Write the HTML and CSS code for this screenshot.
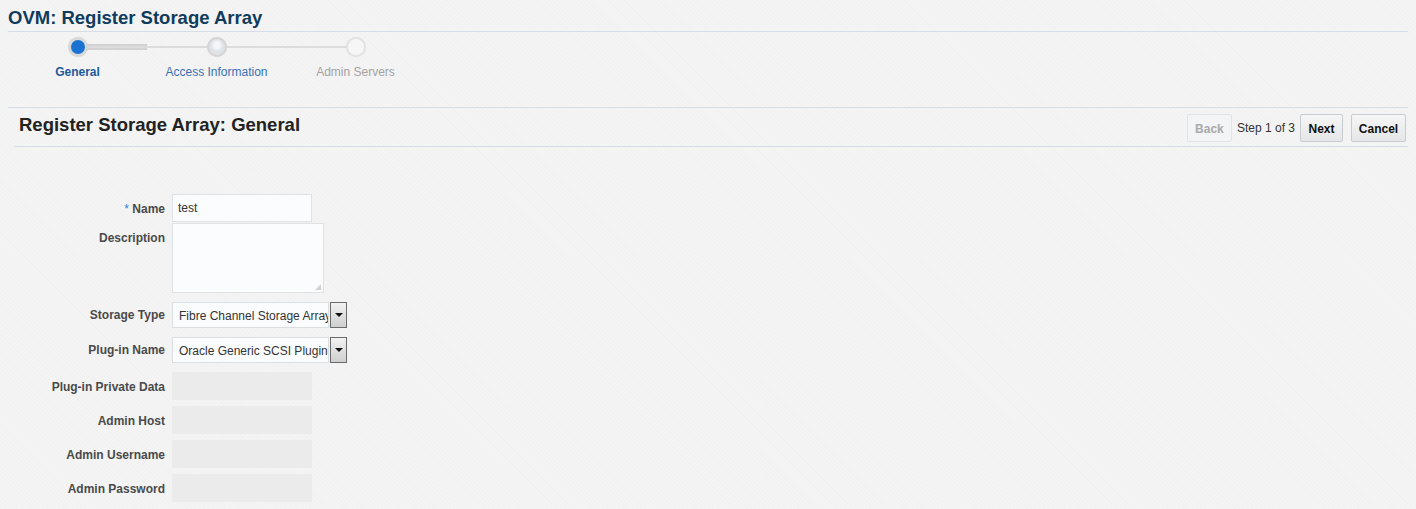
FILE: index.html
```html
<!DOCTYPE html>
<html lang="en">
<head>
<meta charset="utf-8">
<title>OVM: Register Storage Array</title>
<link rel="stylesheet" href="styles.css">
</head>
<body>
<div class="page">
  <h1 class="title">OVM: Register Storage Array</h1>
  <div class="train">
    <div class="step step-current">
      <span class="dot"></span>
      <span class="step-label">General</span>
    </div>
    <div class="step step-next">
      <span class="dot"></span>
      <span class="step-label">Access Information</span>
    </div>
    <div class="step step-off">
      <span class="dot"></span>
      <span class="step-label">Admin Servers</span>
    </div>
  </div>
  <div class="header">
    <h2 class="header-title">Register Storage Array: General</h2>
    <div class="nav">
      <button class="btn btn-disabled" type="button">Back</button>
      <span class="step-count">Step 1 of 3</span>
      <button class="btn btn-next" type="button">Next</button>
      <button class="btn btn-cancel" type="button">Cancel</button>
    </div>
  </div>
  <form class="form">
    <div class="row row-name">
      <label class="lbl"><span class="req">*</span> Name</label>
      <div class="field input">test</div>
    </div>
    <div class="row row-desc">
      <label class="lbl">Description</label>
      <div class="field textarea"><span class="grip"></span></div>
    </div>
    <div class="row row-select">
      <label class="lbl">Storage Type</label>
      <div class="select">
        <div class="select-box">Fibre Channel Storage Array</div>
        <span class="select-btn"><span class="tri"></span></span>
      </div>
    </div>
    <div class="row row-select">
      <label class="lbl">Plug-in Name</label>
      <div class="select">
        <div class="select-box">Oracle Generic SCSI Plugin</div>
        <span class="select-btn"><span class="tri"></span></span>
      </div>
    </div>
    <div class="row row-dis first-dis">
      <label class="lbl">Plug-in Private Data</label>
      <div class="field disabled"></div>
    </div>
    <div class="row row-dis">
      <label class="lbl">Admin Host</label>
      <div class="field disabled"></div>
    </div>
    <div class="row row-dis">
      <label class="lbl">Admin Username</label>
      <div class="field disabled"></div>
    </div>
    <div class="row row-dis">
      <label class="lbl">Admin Password</label>
      <div class="field disabled"></div>
    </div>
  </form>
</div>
</body>
</html>
```

FILE: styles.css
```css
html, body {
  margin: 0;
  padding: 0;
}
body {
  background-color: #f4f4f4;
  background-image: repeating-linear-gradient(45deg, rgba(0,0,0,0.012) 0 1px, transparent 1px 3px);
  font-family: "Liberation Sans", Arial, sans-serif;
  font-size: 12px;
  color: #333;
  height: 509px;
  overflow: hidden;
}
.page {
  padding: 0 8px;
  width: 1400px;
}
.title {
  margin: 0;
  height: 32px;
  box-sizing: border-box;
  padding-top: 8px;
  font-size: 18.5px;
  line-height: 20px;
  font-weight: bold;
  color: #0f3b5d;
  border-bottom: 1px solid #d5dee8;
}
.train {
  display: flex;
  height: 75px;
  border-bottom: 1px solid #d5dee8;
}
.step {
  position: relative;
  width: 139px;
  display: flex;
  flex-direction: column;
  align-items: center;
}
.dot {
  position: relative;
  z-index: 1;
  margin-top: 5px;
  width: 20px;
  height: 20px;
  box-sizing: border-box;
  border-radius: 50%;
  background: #f4f4f4;
  border: 2px solid #dadada;
  box-shadow: 0 0 1px rgba(0,0,0,0.1);
}
.step-current .dot {
  border: 3px solid #d9d9d9;
  background: #1a73d1;
}
.step-next .dot {
  background: radial-gradient(circle at 50% 40%, #f4f6f8 0 3px, #dfe3e7 6px);
  border: 2px solid #d4d4d4;
}
.step-off .dot {
  background: #f6f6f6;
  border: 2px solid #e3e3e3;
}
.step-current::after,
.step-next::after {
  content: "";
  position: absolute;
  top: 14px;
  left: 69px;
  width: 139px;
  height: 2px;
  background: #dcdcdc;
}
.step-current::before {
  content: "";
  position: absolute;
  top: 12px;
  left: 69px;
  width: 70px;
  height: 6px;
  background: #d2d2d2;
  z-index: 0;
}
.step-label {
  margin-top: 8px;
  font-size: 12px;
  line-height: 14px;
  white-space: nowrap;
}
.step-current .step-label { color: #1e5a98; font-weight: bold; }
.step-next .step-label { color: #3a70b3; }
.step-off .step-label { color: #a3a3a3; }

.header {
  display: flex;
  align-items: center;
  justify-content: space-between;
  margin-left: 6px;
  height: 38px;
  border-bottom: 1px solid #d5dee8;
}
.header-title {
  margin: 0 0 4px 5px;
  font-size: 18.5px;
  font-weight: bold;
  color: #222;
}
.nav {
  display: flex;
  align-items: center;
  margin-right: 2px;
  margin-top: 2px;
}
.btn {
  height: 28px;
  box-sizing: border-box;
  padding: 1px 0 0;
  font-family: "Liberation Sans", Arial, sans-serif;
  font-size: 12px;
  font-weight: bold;
  color: #111;
  background: linear-gradient(#f6f6f6, #e5e6e7);
  border: 1px solid #c6ccd1;
  border-radius: 2px;
}
.btn-disabled {
  color: #a9a9a9;
  background: #f3f4f5;
  border-color: #e1e4e7;
  width: 45px;
}
.step-count {
  margin-left: 5px;
  color: #333;
}
.btn-next { margin-left: 5px; width: 43px; }
.btn-cancel { margin-left: 8px; width: 55px; }

.form {
  margin-top: 47px;
  display: flex;
  flex-direction: column;
}
.row {
  display: flex;
  align-items: flex-start;
}
.lbl {
  box-sizing: border-box;
  width: 157px;
  height: 28px;
  text-align: right;
  font-weight: bold;
  color: #4a4a4a;
  line-height: 26px;
  padding-top: 2px;
  margin-right: 7px;
  white-space: nowrap;
}
.req { color: #2a7fd4; font-weight: normal; }
.field {
  box-sizing: border-box;
  width: 140px;
  height: 28px;
}
.input {
  background: #fbfcfd;
  border: 1px solid #dfe2e5;
  padding: 1px 5px 0;
  line-height: 25px;
  color: #333;
  font-size: 12px;
}
.row-desc { margin-top: 1px; }
.textarea {
  position: relative;
  width: 152px;
  height: 70px;
  background: #fbfcfd;
  border: 1px solid #dfe2e5;
}
.grip {
  position: absolute;
  right: 2px;
  bottom: 2px;
  width: 6px;
  height: 6px;
  background: radial-gradient(circle, #a0a0a0 0.6px, transparent 0.8px) 0 0 / 2px 2px;
  clip-path: polygon(100% 0, 100% 100%, 0 100%);
}
.row-select { margin-top: 9px; }
.select {
  display: flex;
  height: 26px;
}
.select-box {
  box-sizing: border-box;
  width: 157px;
  height: 26px;
  background: #fbfcfd;
  border: 1px solid #dcdfe2;
  padding: 1px 0 0 6px;
  line-height: 24px;
  white-space: nowrap;
  overflow: hidden;
  color: #333;
}
.row-select .lbl {
  height: 26px;
  padding-top: 1px;
  line-height: 25px;
}
.select-btn {
  box-sizing: border-box;
  width: 17px;
  height: 26px;
  margin-left: 1px;
  border: 1px solid #6b6b6b;
  background: linear-gradient(#f2f2f2, #cfcfcf);
  display: flex;
  align-items: center;
  justify-content: center;
}
.tri {
  width: 0;
  height: 0;
  border-left: 4px solid transparent;
  border-right: 4px solid transparent;
  border-top: 4px solid #111;
}
.row-dis { margin-top: 6px; }
.first-dis { margin-top: 9px; }
.disabled {
  background: #ebebeb;
}
```
